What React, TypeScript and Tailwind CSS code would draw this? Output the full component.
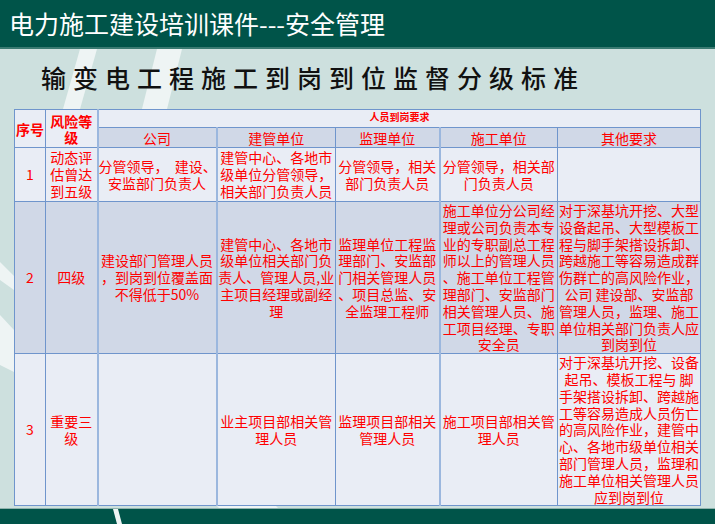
import React from "react";

const cell = "border border-[#6f95cc] p-0 align-middle text-center";
const soft = "border-l-2 border-l-[#9bb7de]";
const lightBg = "bg-[#e9edf5]";
const darkBg = "bg-[#d0d8e7]";

function Lines({ items }: { items: string[] }) {
  return (
    <div className="leading-[16.8px]">
      {items.map((t, i) => (
        <div key={i} className="whitespace-pre">{t}</div>
      ))}
    </div>
  );
}

const rows = [
  {
    no: "1",
    level: ["动态评", "估曾达", "到五级"],
    company: ["分管领导，  建设、", "安监部门负责人"],
    owner: ["建管中心、各地市", "级单位分管领导，", "相关部门负责人员"],
    supervisor: ["分管领导，相关", "部门负责人员"],
    builder: ["分管领导，相关部", "门负责人员"],
    other: [] as string[],
    h: "h-[54px]",
    bg: lightBg,
  },
  {
    no: "2",
    level: ["四级"],
    company: ["建设部门管理人员", "，到岗到位覆盖面", "不得低于50%"],
    owner: ["建管中心、各地市", "级单位相关部门负", "责人、管理人员,业", "主项目经理或副经", "理"],
    supervisor: ["监理单位工程监", "理部门、安监部", "门相关管理人员", "、项目总监、安", "全监理工程师"],
    builder: [
      "施工单位分公司经",
      "理或公司负责本专",
      "业的专职副总工程",
      "师以上的管理人员",
      "、施工单位工程管",
      "理部门、安监部门",
      "相关管理人员、施",
      "工项目经理、专职",
      "安全员",
    ],
    other: [
      "对于深基坑开挖、大型",
      "设备起吊、大型模板工",
      "程与脚手架搭设拆卸、",
      "跨越施工等容易造成群",
      "伤群亡的高风险作业，",
      "公司 建设部、安监部",
      "管理人员，监理、施工",
      "单位相关部门负责人应",
      "到岗到位",
    ],
    h: "h-[152px]",
    bg: darkBg,
  },
  {
    no: "3",
    level: ["重要三", "级"],
    company: [] as string[],
    owner: ["业主项目部相关管", "理人员"],
    supervisor: ["监理项目部相关", "管理人员"],
    builder: ["施工项目部相关管", "理人员"],
    other: [
      "对于深基坑开挖、设备",
      "起吊、模板工程与 脚",
      "手架搭设拆卸、跨越施",
      "工等容易造成人员伤亡",
      "的高风险作业，建管中",
      "心、各地市级单位相关",
      "部门管理人员，监理和",
      "施工单位相关管理人员",
      "应到岗到位",
    ],
    h: "h-[151px]",
    bg: lightBg,
  },
];

export default function App() {
  return (
    <div className="w-[715px] h-[524px] flex flex-col bg-[#cde0de] overflow-hidden font-['Noto_Sans_CJK_SC','Noto_Sans',sans-serif]">
      <div className="h-[49px] shrink-0 bg-[#005449] border-b-2 border-[#3a7b72] flex items-center pl-[9px] pb-[2px]">
        <h1 className="text-white text-[25px] leading-[28px]">电力施工建设培训课件---安全管理</h1>
      </div>

      <div className="relative flex-1 flex flex-col">
        <svg className="absolute inset-0 w-full h-full" viewBox="0 0 715 459" preserveAspectRatio="none">
          <polygon points="80,0 97,0 80,60 63,60" fill="#eef4f4" />
          <polygon points="157,0 182,0 167,60 142,60" fill="#eef4f4" />
          <polygon points="0,213 14,227 14,241 0,231" fill="#eef4f4" />
          <polygon points="0,266 14,281 14,323 0,316" fill="#eef4f4" />
          <polygon points="215,455 274,455 278,459 219,459" fill="#eef4f4" />
        </svg>

        <div className="relative h-[60px] pl-[41px] pt-[13px]">
          <h2 className="text-[25px] leading-[30px] tracking-[7px] font-medium text-[#111]">
            输变电工程施工到岗到位监督分级标准
          </h2>
        </div>

        <div className="relative pl-[14px]">
          <table className="table-fixed border-collapse w-[686px] border border-[#5a86c4] text-[14px] text-[#ff0000]">
            <colgroup>
              <col className="w-[31px]" />
              <col className="w-[52px]" />
              <col className="w-[119px]" />
              <col className="w-[119px]" />
              <col className="w-[104px]" />
              <col className="w-[118px]" />
              <col className="w-[143px]" />
            </colgroup>
            <tbody>
              <tr className="h-[18px]">
                <td rowSpan={2} className={`${cell} ${lightBg} font-bold leading-[16px]`}>
                  序号
                </td>
                <td rowSpan={2} className={`${cell} ${lightBg} font-bold leading-[16px]`}>
                  <div>风险等</div>
                  <div>级</div>
                </td>
                <td colSpan={5} className={`${cell} ${soft} ${lightBg} !align-top !text-left`}>
                  <div className="pl-[271px] text-[10px] leading-[13px] font-bold">人员到岗要求</div>
                </td>
              </tr>
              <tr className={`h-[20px] ${darkBg} leading-[18px]`}>
                <td className={`${cell} ${soft}`}>公司</td>
                <td className={`${cell} ${soft}`}>建管单位</td>
                <td className={cell}>监理单位</td>
                <td className={`${cell} ${soft}`}>施工单位</td>
                <td className={cell}>其他要求</td>
              </tr>
              {rows.map((r) => (
                <tr key={r.no} className={`${r.h} ${r.bg}`}>
                  <td className={cell}>{r.no}</td>
                  <td className={cell}>
                    <Lines items={r.level} />
                  </td>
                  <td className={`${cell} ${soft}`}>
                    <Lines items={r.company} />
                  </td>
                  <td className={`${cell} ${soft}`}>
                    <Lines items={r.owner} />
                  </td>
                  <td className={cell}>
                    <Lines items={r.supervisor} />
                  </td>
                  <td className={`${cell} ${soft}`}>
                    <Lines items={r.builder} />
                  </td>
                  <td className={cell}>
                    <Lines items={r.other} />
                  </td>
                </tr>
              ))}
            </tbody>
          </table>
        </div>
      </div>

      <div className="relative h-[16px] shrink-0 bg-[#005449] border-t border-[#8fb3ad]">
        <svg className="absolute inset-0 w-full h-full" viewBox="0 0 715 15" preserveAspectRatio="none">
          <polygon points="113,0 118,0 122,15 117,15" fill="#eef4f4" />
        </svg>
      </div>
    </div>
  );
}
